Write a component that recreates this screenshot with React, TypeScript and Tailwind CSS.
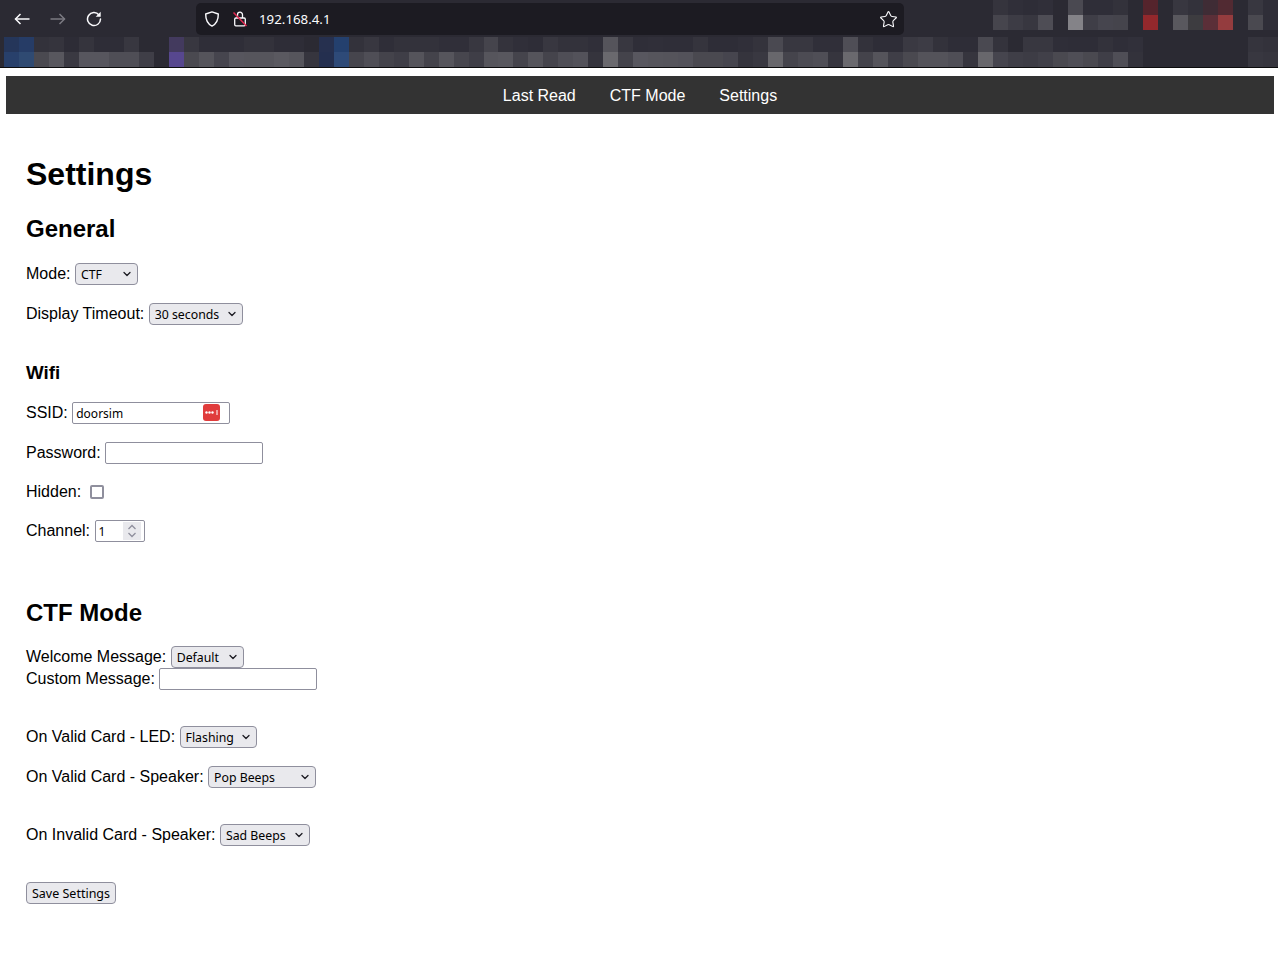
import { ChevronDown, Star } from 'lucide-react';

const BOOKMARK_TOP = [
  '#25365a', '#263c66', '#33323b', '#35343d', '#2d2c36', '#35343d', '#2e2d37', '#2e2d37', '#383740', '#2b2a33',
  '#2b2a33', '#433a5e', '#383740', '#2f2e38', '#2f2e38', '#2f2e38', '#33323b', '#33323b', '#2e2d37', '#2e2d37',
  '#2b2a33', '#26304f', '#24406e', '#33323b', '#383740', '#2f2e38', '#33323b', '#33323b', '#33323b', '#302f39',
  '#302f39', '#383740', '#45444c', '#34333c', '#302f39', '#2e2d37', '#383740', '#33323b', '#33323b', '#302f39',
  '#55545b', '#383740', '#2f2e38', '#302f39', '#2f2e38', '#2f2e38', '#35343d', '#2e2d37', '#2e2d37', '#302f39',
  '#34333c', '#4a4951', '#383740', '#383740', '#302f39', '#302f39', '#4f4e56', '#33323b', '#2e2d37', '#2e2d37',
  '#3a3942', '#3d3c45', '#33323b', '#2e2d37', '#2e2d37', '#4a4951', '#34333c', '#2b2a33', '#383740', '#383740',
  '#2f2e38', '#2e2d37', '#2e2d37', '#33323b', '#2f2e38', '#31303a', '#2b2a33', '#2b2a33', '#2b2a33', '#2b2a33',
  '#2b2a33', '#2b2a33', '#2b2a33', '#35343d', '#33323b',
];

const BOOKMARK_BOTTOM = [
  '#28406b', '#2f4a72', '#4a4950', '#58575e', '#3a3942', '#57565e', '#57565e', '#4f4e56', '#4f4e56', '#3f3e47',
  '#2b2a33', '#57478f', '#4a4950', '#55545b', '#46454e', '#57565e', '#56555c', '#56555c', '#5a5960', '#56555c',
  '#36353e', '#242f4f', '#2e4a78', '#46454d', '#4f4e56', '#44434b', '#3f3e47', '#55545b', '#44434b', '#56555c',
  '#47464e', '#3f3e47', '#56555c', '#58575e', '#45444c', '#55545b', '#45444c', '#4f4e56', '#53525a', '#35343d',
  '#6a696e', '#44434b', '#58575f', '#56555c', '#55545b', '#53525a', '#4a4950', '#4a4950', '#46454e', '#35343d',
  '#393841', '#68676c', '#45444c', '#4c4b53', '#4f4e56', '#36353e', '#6a696e', '#44434b', '#55545b', '#3f3e47',
  '#4a4950', '#54535a', '#54535a', '#4f4e56', '#36353e', '#68676c', '#46454e', '#3f3e47', '#3d3c45', '#414049',
  '#4a4950', '#4f4e56', '#4a4950', '#3f3e47', '#4f4e56', '#33323b', '#2b2a33', '#2b2a33', '#2b2a33', '#2b2a33',
  '#2b2a33', '#2b2a33', '#2b2a33', '#383740', '#36353e',
];

const TOOLBAR_TOP = [
  '#35343d', '#302f39', '#2e2d37', '#302f39', '#2b2a33', '#4a4951', '#2f2e38', '#2f2e38', '#33323b', '#2b2a33',
  '#55242c', '#2b2a33', '#383740', '#33323b', '#3f2c35', '#512a32', '#2b2a33', '#383740', '#2f2e38',
];

const TOOLBAR_BOTTOM = [
  '#46454d', '#3d3c45', '#383740', '#4e4d55', '#2b2a33', '#848388', '#3f3e47', '#46454e', '#45444c', '#2b2a33',
  '#93282c', '#2b2a33', '#59585e', '#3d3c40', '#5b2f38', '#943c3e', '#2b2a33', '#4a4950', '#2f2e38',
];

function PixelRow({ colors }: { colors: string[] }) {
  return (
    <div className="flex h-[15px]">
      {colors.map((color, index) => (
        <div key={index} className="w-[15px] h-full" style={{ backgroundColor: color }} />
      ))}
    </div>
  );
}

function Arrow({ flip = false, color }: { flip?: boolean; color: string }) {
  return (
    <svg width="16" height="16" viewBox="0 0 16 16" fill="none" stroke={color} strokeWidth="1.500" className={flip ? 'rotate-180' : ''}>
      <path d="M1.500 8H15.500" />
      <path d="M6.500 3 1.500 8l5 5" />
    </svg>
  );
}

function Reload() {
  return (
    <svg width="16" height="16" viewBox="0 0 16 16" fill="none">
      <path d="M13 3.900A6.500 6.500 0 1 0 14.500 8" stroke="#fbfbfe" strokeWidth="1.500" strokeLinecap="round" />
      <path d="M14.700 0.800V5.800H9.700z" fill="#fbfbfe" />
    </svg>
  );
}

function ShieldIcon() {
  return (
    <svg width="16" height="16" viewBox="0 0 16 16" fill="none">
      <path
        d="M8 .9 14.300 3c.1 5.600-1.400 9.600-6.300 12.100C3.100 12.600 1.600 8.600 1.700 3z"
        stroke="#fbfbfe"
        strokeWidth="1.400"
        strokeLinejoin="round"
      />
    </svg>
  );
}

function InsecureLock() {
  return (
    <svg width="16" height="16" viewBox="0 0 16 16" fill="none">
      <path d="M5.500 7V3.700a2.500 2.500 0 0 1 5 0V7" stroke="#fbfbfe" strokeWidth="1.300" />
      <rect x="2.700" y="7" width="10.600" height="7.800" rx="1.200" stroke="#fbfbfe" strokeWidth="1.300" />
      <path d="M1.500 1.500 14.500 15" stroke="#e22850" strokeWidth="1.500" />
    </svg>
  );
}

function PasswordManagerBadge() {
  return (
    <svg width="17" height="17" viewBox="0 0 17 17" className="absolute right-[10px] top-[2px]">
      <rect width="17" height="17" rx="3" fill="#e03c3c" />
      <circle cx="3.500" cy="8.500" r="1.200" fill="#fff" />
      <circle cx="6.500" cy="8.500" r="1.200" fill="#fff" />
      <circle cx="9.500" cy="8.500" r="1.200" fill="#fff" />
      <rect x="13.500" y="6" width="1" height="5" fill="#fff" />
    </svg>
  );
}

function Dropdown({ value, width }: { value: string; width: string }) {
  return (
    <div className={`relative h-[22px] ${width}`}>
      <select
        defaultValue={value}
        className="block appearance-none w-full h-full pl-[5px] pt-[2px] bg-[#e9e9ed] border border-[#8f8f9d] rounded-[4px] text-[12.3px] text-black font-['Noto_Sans',sans-serif]"
      >
        <option>{value}</option>
      </select>
      <ChevronDown size={12} strokeWidth={2.6} className="absolute right-[5px] top-[5px] text-[#1c1b22] pointer-events-none" />
    </div>
  );
}

function TextBox({ value = '', badge = false }: { value?: string; badge?: boolean }) {
  return (
    <div className="relative h-[22px] w-[158px]">
      <input
        readOnly
        value={value}
        className="block w-full h-full px-[3px] bg-white border border-[#8f8f9d] rounded-[2px] text-[12px] text-black font-['Noto_Sans',sans-serif]"
      />
      {badge && <PasswordManagerBadge />}
    </div>
  );
}

function Row({ label, className = '', children }: { label: string; className?: string; children: React.ReactNode }) {
  return (
    <div className={`flex items-center gap-[4.45px] h-[22px] ${className}`}>
      <label>{label}:</label>
      {children}
    </div>
  );
}

export default function App() {
  return (
    <div className="min-h-[960px] bg-white text-black text-base font-['Liberation_Sans',Arial,sans-serif]">
      <header className="bg-[#2b2a33] h-[67px]">
        <div className="flex items-start h-[37px]">
          <div className="flex items-center gap-[20px] h-[37px] pl-[14px]">
            <Arrow color="#fbfbfe" />
            <Arrow flip color="#7b7a82" />
            <Reload />
          </div>
          <div className="flex items-center ml-[94px] mt-[3px] w-[708px] h-[32px] rounded-[5px] bg-[#1c1b22] pl-[8px] pr-[6px]">
            <ShieldIcon />
            <div className="ml-[12px]">
              <InsecureLock />
            </div>
            <span className="ml-[11px] mt-[2px] text-[13.3px] text-[#fbfbfe] font-['Noto_Sans',sans-serif]">192.168.4.1</span>
            <Star size={19} strokeWidth={1.4} className="ml-auto text-[#fbfbfe]" />
          </div>
          <div className="ml-[89px]">
            <PixelRow colors={TOOLBAR_TOP} />
            <PixelRow colors={TOOLBAR_BOTTOM} />
          </div>
        </div>
        <div className="pl-[4px] overflow-hidden">
          <PixelRow colors={BOOKMARK_TOP} />
          <PixelRow colors={BOOKMARK_BOTTOM} />
        </div>
      </header>
      <div className="h-px bg-[#0c0c0d]" />

      <nav className="flex justify-center gap-[34px] ml-[6px] mr-[4px] mt-[8px] pt-[1px] h-[38px] items-center bg-[#333333] text-white">
        <a>Last Read</a>
        <a>CTF Mode</a>
        <a>Settings</a>
      </nav>

      <main className="pl-[26px] pt-[42px]">
        <h1 className="text-[32px] leading-[37px] font-bold">Settings</h1>

        <h2 className="mt-[22px] text-2xl leading-[28px] font-bold">General</h2>
        <Row label="Mode" className="mt-[20px]">
          <Dropdown value="CTF" width="w-[63px]" />
        </Row>
        <Row label="Display Timeout" className="mt-[18px]">
          <Dropdown value="30 seconds" width="w-[94px]" />
        </Row>

        <h3 className="mt-[37px] text-[18.72px] leading-[22px] font-bold">Wifi</h3>
        <Row label="SSID" className="mt-[18px]">
          <TextBox value="doorsim" badge />
        </Row>
        <Row label="Password" className="mt-[18px]">
          <TextBox />
        </Row>
        <Row label="Hidden" className="mt-[17px]">
          <input
            type="checkbox"
            readOnly
            className="appearance-none ml-[4px] w-[14px] h-[14px] bg-white border-2 border-[#8f8f9d] rounded-[2px]"
          />
        </Row>
        <Row label="Channel" className="mt-[17px]">
          <div className="flex items-center w-[50px] h-[22px] bg-white border border-[#8f8f9d] rounded-[2px] pl-[3px] pr-[3px] text-[12px] font-['Noto_Sans',sans-serif]">
            <span className="mt-[1px]">1</span>
            <div className="ml-auto flex flex-col items-center justify-center w-[18px] h-[18px] bg-[#e9e9ed] text-[#8f8f9d]">
              <svg width="10" height="16" viewBox="0 0 10 16" fill="none" stroke="currentColor" strokeWidth="1.300">
                <path d="M1.500 6 5 2.500 8.500 6" />
                <path d="M1.500 10 5 13.500 8.500 10" />
              </svg>
            </div>
          </div>
        </Row>

        <h2 className="mt-[57px] text-2xl leading-[28px] font-bold">CTF Mode</h2>
        <Row label="Welcome Message" className="mt-[19px]">
          <Dropdown value="Default" width="w-[73px]" />
        </Row>
        <Row label="Custom Message">
          <TextBox />
        </Row>
        <Row label="On Valid Card - LED" className="mt-[36px]">
          <Dropdown value="Flashing" width="w-[77px]" />
        </Row>
        <Row label="On Valid Card - Speaker" className="mt-[18px]">
          <Dropdown value="Pop Beeps" width="w-[108px]" />
        </Row>
        <Row label="On Invalid Card - Speaker" className="mt-[36px]">
          <Dropdown value="Sad Beeps" width="w-[90px]" />
        </Row>

        <button className="block mt-[36px] pt-[2px] h-[22px] w-[90px] bg-[#e9e9ed] border border-[#8f8f9d] rounded-[4px] text-[12.5px] font-['Noto_Sans',sans-serif]">
          Save Settings
        </button>
      </main>
    </div>
  );
}
